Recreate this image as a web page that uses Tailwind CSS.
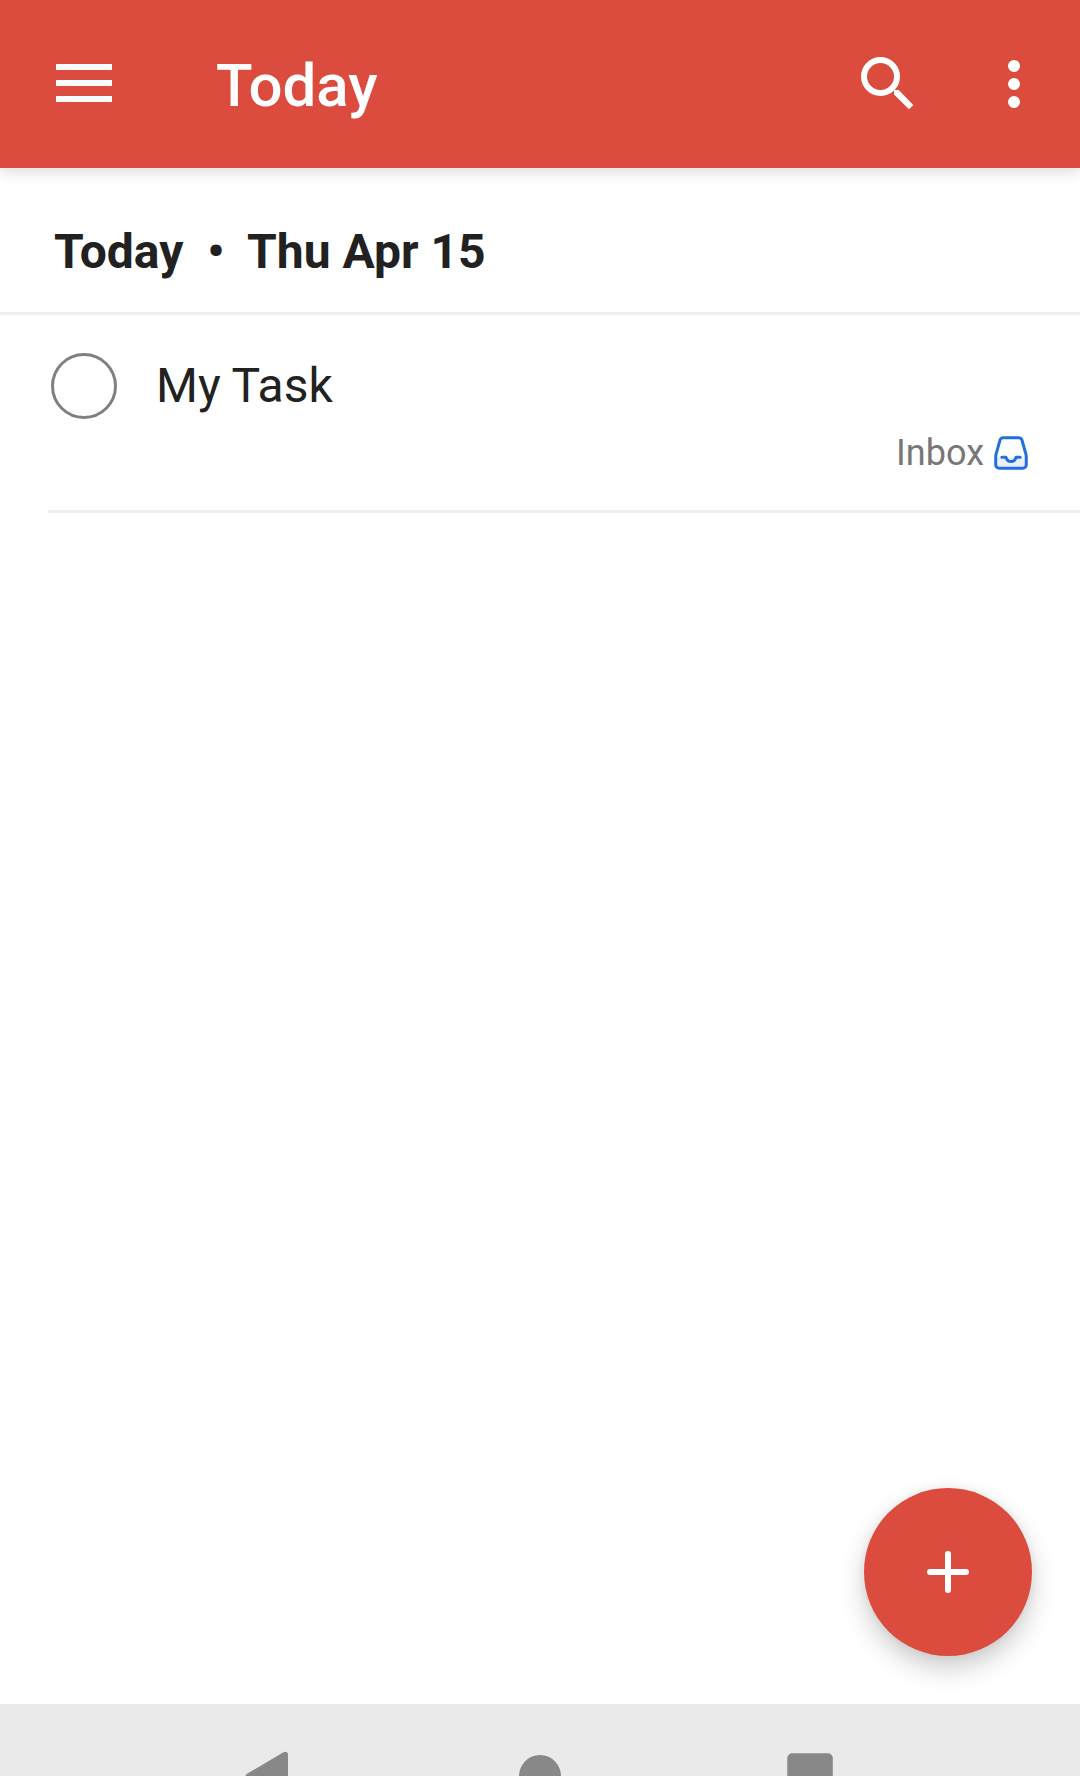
<!DOCTYPE html>
<html lang="en">
<head>
<meta charset="utf-8">
<meta name="viewport" content="width=device-width, initial-scale=1">
<title>Today</title>
<script src="https://cdn.jsdelivr.net/npm/@tailwindcss/browser@4"></script>
</head>
<body class="flex h-screen flex-col overflow-hidden bg-white font-['Roboto',sans-serif] text-[#212121]">
  <header class="z-10 flex h-[168px] shrink-0 items-center bg-[#db4c3f] pr-[30px] pl-12 text-white shadow-[0_4px_14px_rgba(0,0,0,0.14)]">
    <button type="button" aria-label="Open menu" class="size-[72px]">
      <svg viewBox="0 0 72 72" class="size-[72px]" fill="currentColor"><path d="M8 16h56v6H8zM8 32h56v6H8zM8 48h56v6H8z"/></svg>
    </button>
    <h1 class="ml-24 flex-1 pt-1 text-[60px] leading-[72px] font-medium">Today</h1>
    <div class="flex gap-[54px]">
      <button type="button" aria-label="Search" class="size-[72px]">
        <svg viewBox="0 0 72 72" class="size-[72px]"><circle cx="28.5" cy="28.5" r="16.5" fill="none" stroke="currentColor" stroke-width="6"/><path d="M42 42h4.700L61.300 57 57 61.300 42 46.500z" fill="currentColor"/></svg>
      </button>
      <button type="button" aria-label="More options" class="size-[72px]">
        <svg viewBox="0 0 72 72" class="size-[72px]" fill="currentColor"><circle cx="36" cy="18" r="6"/><circle cx="36" cy="36" r="6"/><circle cx="36" cy="54" r="6"/></svg>
      </button>
    </div>
  </header>

  <main class="relative flex-1">
    <h2 class="border-b-3 border-[#efefef] px-[54px] pt-14 pb-8 text-[48px] leading-[56px] font-bold whitespace-pre">Today  •  Thu Apr 15</h2>
    <ul>
      <li class="ml-12 border-b-3 border-[#efefef] pt-[38px] pr-[51px] pb-[35px] pl-[3px]">
        <div class="flex items-center gap-[39px]">
          <input id="task" type="checkbox" class="size-[66px] appearance-none rounded-full border-3 border-[#808080] checked:bg-[#808080]">
          <label for="task" class="text-[48px] leading-[56px]">My Task</label>
        </div>
        <a href="#inbox" class="mt-3 flex items-center justify-end gap-[9px] text-[36px] leading-[44px] text-[#777777]">
          Inbox
          <svg viewBox="0 0 36 36" class="size-9" fill="none" stroke="#246fe0" stroke-width="3" stroke-linecap="round" stroke-linejoin="round"><path d="M3 22.300h30V30a3 3 0 0 1-3 3H6a3 3 0 0 1-3-3z" fill="#e9f0fc" stroke="none"/><path d="M10.300 2.700h15.400a3.500 3.500 0 0 1 3.300 2.500l3.900 14c.3 1.200.4 2.300.4 3.500v7.100a3.500 3.500 0 0 1-3.500 3.500H6.200a3.500 3.500 0 0 1-3.500-3.500v-7.100c0-1.200.1-2.300.4-3.500L7 5.200a3.500 3.500 0 0 1 3.300-2.500z"/><path d="M8.800 22.300h4.200c.7 2.800 2.500 4.300 5 4.300s4.300-1.500 5-4.300h4.200"/></svg>
        </a>
      </li>
    </ul>
    <button type="button" aria-label="Add task" class="absolute right-12 bottom-12 flex size-[168px] items-center justify-center rounded-full bg-[#db4c3f] text-white shadow-[0_12px_26px_rgba(0,0,0,0.2),0_0_10px_rgba(0,0,0,0.06)]">
      <svg viewBox="0 0 72 72" class="size-[72px]" fill="none" stroke="currentColor" stroke-width="6" stroke-linecap="round"><path d="M36 18v36M18 36h36"/></svg>
    </button>
  </main>

  <nav aria-label="System" class="flex h-[72px] shrink-0 overflow-hidden bg-[#eaeaea] px-[12.5%] text-[#888888]">
    <button type="button" aria-label="Back" class="flex h-36 flex-1 items-center justify-center">
      <svg viewBox="0 0 72 72" class="size-[72px]" fill="currentColor"><path d="M54 14.500v43c0 2.300-2 3.200-4 2L13 38.200c-2-1.200-2-3.200 0-4.400L49 12.500c2.500-1.500 5-.5 5 2z"/></svg>
    </button>
    <button type="button" aria-label="Home" class="flex h-36 flex-1 items-center justify-center">
      <svg viewBox="0 0 72 72" class="size-[72px]" fill="currentColor"><circle cx="36" cy="36" r="21"/></svg>
    </button>
    <button type="button" aria-label="Recent apps" class="flex h-36 flex-1 items-center justify-center">
      <svg viewBox="0 0 72 72" class="size-[72px]" fill="currentColor"><rect x="13.300" y="13.300" width="45.500" height="45.500" rx="5"/></svg>
    </button>
  </nav>
</body>
</html>
